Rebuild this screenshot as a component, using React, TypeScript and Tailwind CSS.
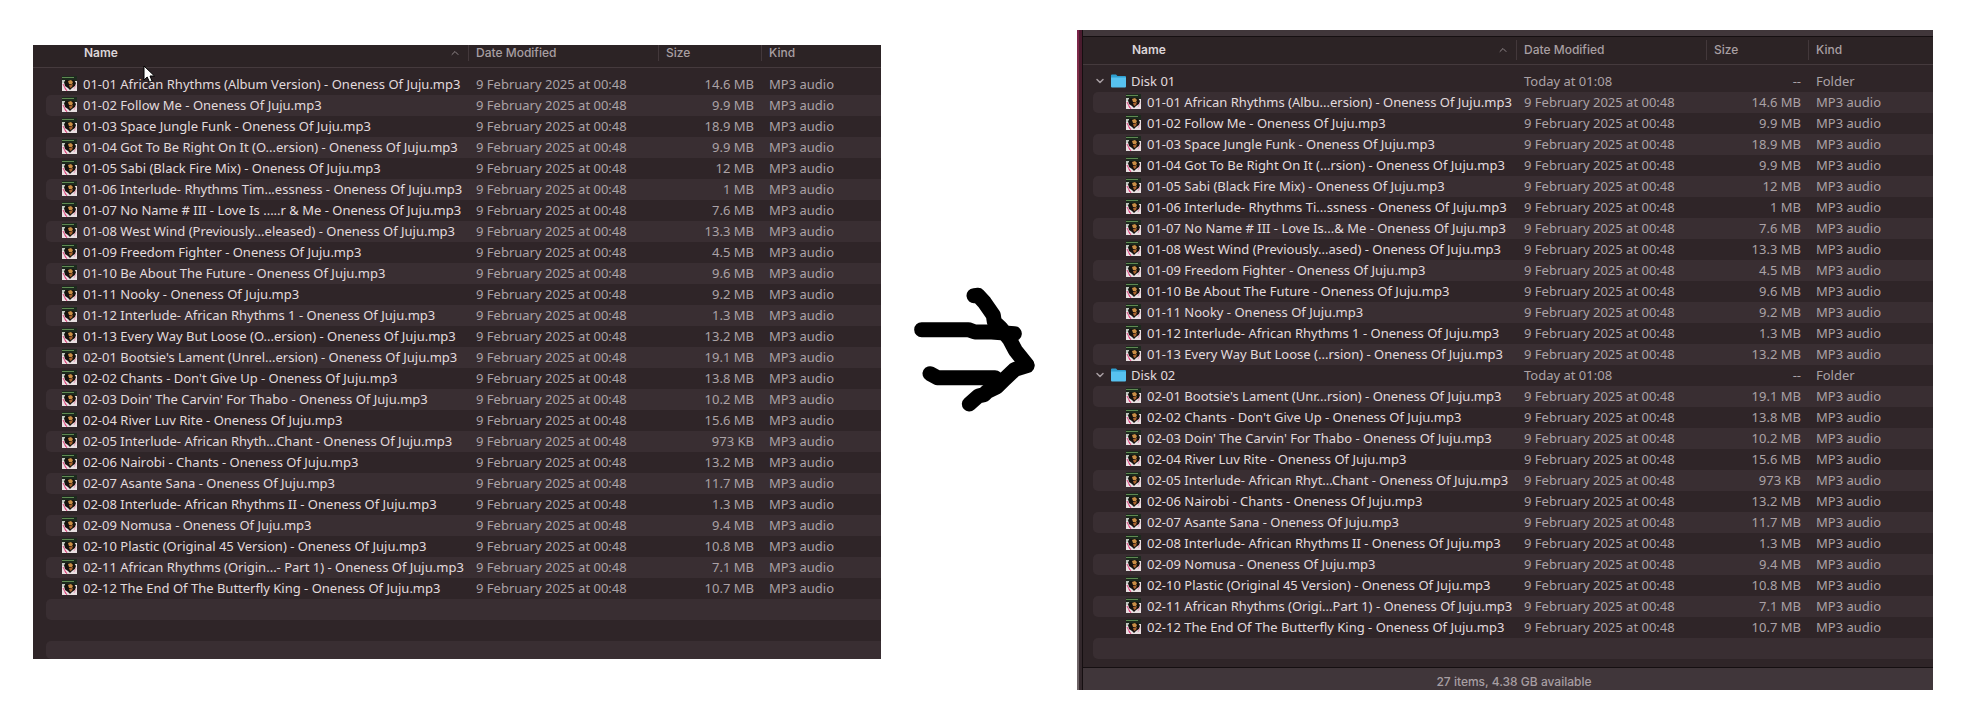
import clsx from "clsx";
import { ChevronDown, ChevronUp } from "lucide-react";
import type { ReactNode } from "react";

type Entry = {
  name: string;
  size: string;
  folder?: boolean;
};

const MODIFIED = "9 February 2025 at 00:48";

const flatEntries: Entry[] = [
  { name: "01-01 African Rhythms (Album Version) - Oneness Of Juju.mp3", size: "14.6 MB" },
  { name: "01-02 Follow Me - Oneness Of Juju.mp3", size: "9.9 MB" },
  { name: "01-03 Space Jungle Funk - Oneness Of Juju.mp3", size: "18.9 MB" },
  { name: "01-04 Got To Be Right On It (O...ersion) - Oneness Of Juju.mp3", size: "9.9 MB" },
  { name: "01-05 Sabi (Black Fire Mix) - Oneness Of Juju.mp3", size: "12 MB" },
  { name: "01-06 Interlude- Rhythms Tim...essness - Oneness Of Juju.mp3", size: "1 MB" },
  { name: "01-07 No Name # III - Love Is .....r & Me - Oneness Of Juju.mp3", size: "7.6 MB" },
  { name: "01-08 West Wind (Previously...eleased) - Oneness Of Juju.mp3", size: "13.3 MB" },
  { name: "01-09 Freedom Fighter - Oneness Of Juju.mp3", size: "4.5 MB" },
  { name: "01-10 Be About The Future - Oneness Of Juju.mp3", size: "9.6 MB" },
  { name: "01-11 Nooky - Oneness Of Juju.mp3", size: "9.2 MB" },
  { name: "01-12 Interlude- African Rhythms 1 - Oneness Of Juju.mp3", size: "1.3 MB" },
  { name: "01-13 Every Way But Loose (O...ersion) - Oneness Of Juju.mp3", size: "13.2 MB" },
  { name: "02-01 Bootsie's Lament (Unrel...ersion) - Oneness Of Juju.mp3", size: "19.1 MB" },
  { name: "02-02 Chants - Don't Give Up - Oneness Of Juju.mp3", size: "13.8 MB" },
  { name: "02-03 Doin' The Carvin' For Thabo - Oneness Of Juju.mp3", size: "10.2 MB" },
  { name: "02-04 River Luv Rite - Oneness Of Juju.mp3", size: "15.6 MB" },
  { name: "02-05 Interlude- African Rhyth...Chant - Oneness Of Juju.mp3", size: "973 KB" },
  { name: "02-06 Nairobi - Chants - Oneness Of Juju.mp3", size: "13.2 MB" },
  { name: "02-07 Asante Sana - Oneness Of Juju.mp3", size: "11.7 MB" },
  { name: "02-08 Interlude- African Rhythms II - Oneness Of Juju.mp3", size: "1.3 MB" },
  { name: "02-09 Nomusa - Oneness Of Juju.mp3", size: "9.4 MB" },
  { name: "02-10 Plastic (Original 45 Version) - Oneness Of Juju.mp3", size: "10.8 MB" },
  { name: "02-11 African Rhythms (Origin...- Part 1) - Oneness Of Juju.mp3", size: "7.1 MB" },
  { name: "02-12 The End Of The Butterfly King - Oneness Of Juju.mp3", size: "10.7 MB" },
];

// the nested rows are indented, so long names are shortened a little more
const shortened: Record<string, string> = {
  "01-01": "01-01 African Rhythms (Albu...ersion) - Oneness Of Juju.mp3",
  "01-04": "01-04 Got To Be Right On It (...rsion) - Oneness Of Juju.mp3",
  "01-06": "01-06 Interlude- Rhythms Ti...ssness - Oneness Of Juju.mp3",
  "01-07": "01-07 No Name # III - Love Is...& Me - Oneness Of Juju.mp3",
  "01-08": "01-08 West Wind (Previously...ased) - Oneness Of Juju.mp3",
  "01-13": "01-13 Every Way But Loose (...rsion) - Oneness Of Juju.mp3",
  "02-01": "02-01 Bootsie's Lament (Unr...rsion) - Oneness Of Juju.mp3",
  "02-05": "02-05 Interlude- African Rhyt...Chant - Oneness Of Juju.mp3",
  "02-11": "02-11 African Rhythms (Origi...Part 1) - Oneness Of Juju.mp3",
};

const nestedEntries: Entry[] = ["01", "02"].flatMap((disk) => [
  { name: `Disk ${disk}`, size: "--", folder: true },
  ...flatEntries
    .filter((e) => e.name.startsWith(disk))
    .map((e) => ({ ...e, name: shortened[e.name.slice(0, 5)] ?? e.name })),
]);

export default function App() {
  return (
    <main className="flex min-h-screen items-start bg-white pl-[33px] pr-[43px] font-['Inter','Liberation_Sans',sans-serif] text-[12px] font-medium">
      <section className="relative mt-[45px] min-w-0 flex-[848] bg-[#2f2528]" aria-label="Flat list">
        <FileTable entries={flatEntries} fillers={["h-[21px]", "h-[21px]", "h-[18px]"]} />
        <Pointer />
      </section>

      <div className="mt-[270px] flex w-[196px] flex-none justify-center pl-[2px]">
        <Arrow />
      </div>

      <section
        className="mt-[30px] flex min-w-0 flex-[856] bg-[#2f2528]"
        aria-label="List grouped by disk"
      >
        {/* sliver of the desktop behind the window */}
        <div className="flex w-[6px] flex-none border-r border-[#150f11]">
          <div className="w-[2px] bg-linear-to-b from-[#7a2248] from-0% via-[#8c4a46] via-25% to-[#6d6265] to-74%" />
          <div className="flex-1 bg-linear-to-b from-[#4a1a2e] from-0% via-[#4a2a2e] via-25% to-[#33282c] to-45%" />
        </div>
        <div className="min-w-0 flex-1">
          <div className="h-[7px] border-b border-[#150f11] bg-[#40363a]" />
          <FileTable entries={nestedEntries} nested fillers={["h-[21px]", "h-[8px]"]} />
          <footer className="h-[23px] border-t border-[#150f11] bg-[#40363a] pl-3 pt-1 text-center leading-5 text-[#a79ea2]">
            27 items, 4.38 GB available
          </footer>
        </div>
      </section>
    </main>
  );
}

function FileTable({
  entries,
  fillers,
  nested = false,
}: {
  entries: Entry[];
  fillers: string[];
  nested?: boolean;
}) {
  return (
    <table className="w-full table-fixed border-collapse text-left">
      <colgroup>
        <col className={nested ? "w-[10px]" : "w-[13px]"} />
        <col />
        <col className="w-[190px]" />
        <col className={nested ? "w-[102px]" : "w-[103px]"} />
        <col className={nested ? "w-[125px]" : "w-[120px]"} />
      </colgroup>
      <thead>
        <tr className="bg-[#2c2325]">
          <th className="border-b border-[#453a3d] p-0" />
          <HeadCell nested={nested} first>
            Name
          </HeadCell>
          <HeadCell nested={nested}>Date Modified</HeadCell>
          <HeadCell nested={nested}>Size</HeadCell>
          <HeadCell nested={nested}>Kind</HeadCell>
        </tr>
      </thead>
      <tbody>
        <tr aria-hidden>
          <td className="h-[6px] p-0" colSpan={5} />
        </tr>
        {entries.map((e, idx) => (
          <Row key={e.name} entry={e} nested={nested} striped={idx % 2 === 1} />
        ))}
        {fillers.map((height, idx) => (
          <tr key={idx} aria-hidden>
            <td className="p-0" />
            <td
              className={clsx(
                "p-0",
                height,
                (entries.length + idx) % 2 === 1 && "rounded-l-[5px] bg-[#392e32]",
              )}
              colSpan={4}
            />
          </tr>
        ))}
      </tbody>
    </table>
  );
}

function HeadCell({
  children,
  nested,
  first = false,
}: {
  children: ReactNode;
  nested: boolean;
  first?: boolean;
}) {
  return (
    <th
      className={clsx("border-b border-[#453a3d] p-0", nested ? "pb-1 pt-[3px]" : "pb-[6px]")}
      scope="col"
    >
      <button
        type="button"
        className={clsx(
          "flex w-full items-center justify-between",
          nested ? "h-5" : "h-4",
          first
            ? clsx("pr-[7px] font-semibold text-[#dcd5d8]", nested ? "pl-[39px]" : "pl-[38px]")
            : "border-l border-[#43383b] pl-[7px] font-medium text-[#a89fa2]",
        )}
      >
        {children}
        {first && <ChevronUp className="size-3 text-[#8f8689]" strokeWidth={2} />}
      </button>
    </th>
  );
}

function Row({ entry, nested, striped }: { entry: Entry; nested: boolean; striped: boolean }) {
  const cell = clsx("p-0 pb-px", striped && "bg-[#392e32]");
  return (
    <tr className="h-[21px] whitespace-nowrap font-['Noto_Sans','Liberation_Sans',sans-serif] text-[13px] font-normal leading-5 text-[#aba2a6]">
      <td className="p-0" />
      <td className={clsx(cell, "text-[#e2dbde]", striped && "rounded-l-[5px]")}>
        <div
          className={clsx(
            "flex items-center",
            entry.folder ? "gap-[5px] pl-px" : "gap-[6px]",
            !entry.folder && (nested ? "pl-[33px]" : "pl-4"),
          )}
        >
          {entry.folder ? (
            <>
              <button type="button" aria-label={`Collapse ${entry.name}`}>
                <ChevronDown className="size-3 text-[#a79ea2]" strokeWidth={3} />
              </button>
              <FolderIcon />
            </>
          ) : (
            <CoverIcon />
          )}
          {entry.name}
        </div>
      </td>
      <td className={clsx(cell, "pl-2")}>{entry.folder ? "Today at 01:08" : MODIFIED}</td>
      <td className={clsx(cell, "pr-[7px] text-right")}>{entry.size}</td>
      <td className={clsx(cell, "pl-2")}>{entry.folder ? "Folder" : "MP3 audio"}</td>
    </tr>
  );
}

function CoverIcon() {
  return (
    <svg className="size-[15px] flex-none" viewBox="0 0 15 15" aria-hidden>
      <rect width="15" height="15" fill="#e9e0e2" />
      <rect width="15" height="5" fill="#1d2a1e" />
      <path d="M0 1h12v1H0z" fill="#5f8a52" />
      <path d="M0 4h3v3H0z" fill="#c3c9c2" />
      <path d="M2 6 4 4h8l2 3-1 3-3 2-2 2-2-2-3-2z" fill="#15120f" />
      <path d="m6 5 3-1 2 2-1 2H7z" fill="#c98e45" />
      <path d="m7 9 4-1-1 3-2 1z" fill="#a8642f" />
      <path d="m1 8 3 6M3 12l2 3" stroke="#e0457f" strokeWidth="1" />
      <path d="m14 9-2 4" stroke="#e79ab5" strokeWidth="1" />
    </svg>
  );
}

function FolderIcon() {
  return (
    <svg className="h-[14px] w-[15px] flex-none" viewBox="0 0 15 14" aria-hidden>
      <path d="M0 1.500q0-1 1-1h4l1.500 1.500H14q1 0 1 1V6H0z" fill="#2f9fd0" />
      <path d="M0 3.500h15V12.500q0 1-1 1H1q-1 0-1-1z" fill="#57c2f0" />
    </svg>
  );
}

function Arrow() {
  return (
    <svg
      className="size-40"
      viewBox="0 0 480 480"
      fill="none"
      stroke="#000"
      strokeWidth="45"
      strokeLinecap="round"
      strokeLinejoin="round"
      aria-hidden
    >
      <path d="M65 179H205l20 7h50l68 5" />
      <path d="M90 311l22 12H285" />
      <path d="M222 77l12-1 20 22 26 38 3 20 19 18 26 33 18 34 35 44" />
      <path d="M381 287l-36 11-30 28-25 25-28 13-10 10-17 4-27 24" />
    </svg>
  );
}

function Pointer() {
  return (
    <svg className="absolute left-[110px] top-5 h-[19px] w-[14px]" viewBox="0 0 14 19" aria-hidden>
      <path
        d="M1 1v14l3.200-3 2.300 5.200 2.600-1.100L7 11h4.500z"
        fill="#fff"
        stroke="#000"
        strokeWidth="1"
        strokeLinejoin="round"
      />
    </svg>
  );
}
